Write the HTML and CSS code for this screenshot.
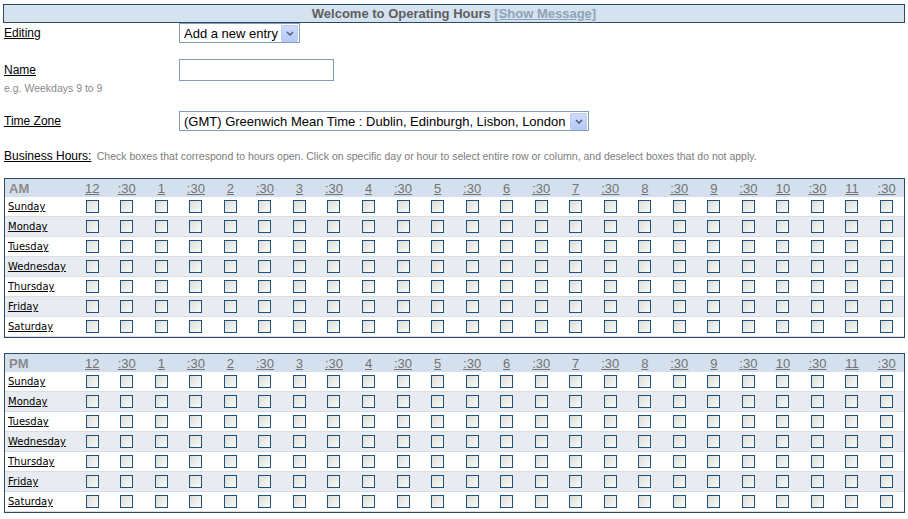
FILE: index.html
```html
<!DOCTYPE html>
<html lang="en">
<head>
    <meta charset="UTF-8">
    <meta name="viewport" content="width=device-width, initial-scale=1.0">
    <title>Operating Hours</title>
    <link rel="stylesheet" href="styles.css">
</head>
<body>
    <div class="titulo-bar">Welcome to Operating Hours <a href="#" class="show-msg">[Show Message]</a></div>

    <div class="form-row row-editing">
        <label class="campo">Editing</label>
        <div class="select-box select-editing">
            <select><option>Add a new entry</option></select>
            <span class="seta"><svg width="8" height="5" viewBox="0 0 8 5"><polyline points="1,1 4,4 7,1" fill="none" stroke="#4d6185" stroke-width="1.6"/></svg></span>
        </div>
    </div>

    <div class="form-row row-name">
        <label class="campo">Name</label>
        <input type="text" class="caixa-texto">
    </div>
    <div class="dica">e.g. Weekdays 9 to 9</div>

    <div class="form-row row-zone">
        <label class="campo">Time Zone</label>
        <div class="select-box select-zone">
            <select><option>(GMT) Greenwich Mean Time : Dublin, Edinburgh, Lisbon, London</option></select>
            <span class="seta"><svg width="8" height="5" viewBox="0 0 8 5"><polyline points="1,1 4,4 7,1" fill="none" stroke="#4d6185" stroke-width="1.6"/></svg></span>
        </div>
    </div>

    <div class="business">
        <span class="campo-inline">Business Hours:</span>
        <span class="descricao">Check boxes that correspond to hours open. Click on specific day or hour to select entire row or column, and deselect boxes that do not apply.</span>
    </div>

    <table class="grade" id="grade-am"></table>
    <table class="grade grade-pm" id="grade-pm"></table>

    <script>
        // monta as duas grades (AM / PM) com os checkboxes
        const horas = ['12', ':30', '1', ':30', '2', ':30', '3', ':30', '4', ':30', '5', ':30',
                       '6', ':30', '7', ':30', '8', ':30', '9', ':30', '10', ':30', '11', ':30'];
        const dias = ['Sunday', 'Monday', 'Tuesday', 'Wednesday', 'Thursday', 'Friday', 'Saturday'];

        function montarGrade(tabela, periodo) {
            let html = '<colgroup><col class="col-dia">';
            horas.forEach(() => html += '<col>');
            html += '</colgroup><thead><tr><th class="periodo">' + periodo + '</th>';
            horas.forEach(h => html += '<th><a href="#">' + h + '</a></th>');
            html += '</tr></thead><tbody>';

            dias.forEach(dia => {
                html += '<tr><td class="dia"><a href="#">' + dia + '</a></td>';
                horas.forEach(() => html += '<td><input type="checkbox"></td>');
                html += '</tr>';
            });

            tabela.innerHTML = html + '</tbody>';
        }

        montarGrade(document.getElementById('grade-am'), 'AM');
        montarGrade(document.getElementById('grade-pm'), 'PM');
    </script>
</body>
</html>
```

FILE: styles.css
```css
body {
    margin: 4px 3px;
    font-family: "Liberation Sans", Arial, sans-serif;
    font-size: 12px;
    color: #000;
    background-color: #fff;
}

/* barra do titulo */
.titulo-bar {
    background-color: #d5e2ef;
    border: 1px solid #2c4a62;
    height: 17px;
    line-height: 17px;
    text-align: center;
    font-size: 13px;
    font-weight: bold;
    color: #5e5e5e;
}

.show-msg { color: #8ea3b8; }

/* linhas do formulario */
.form-row {
    display: flex;
    align-items: center;
}

.campo {
    width: 175px;
    padding-left: 1px;
    text-decoration: underline;
}

.row-name { margin-top: 16px; }
.row-zone { margin-top: 17px; }

.select-box {
    display: flex;
    align-items: center;
    height: 18px;
    border: 1px solid #7f9db9;
    background-color: #fff;
}

.select-box select {
    appearance: none;
    -webkit-appearance: none;
    border: none;
    outline: none;
    background: transparent;
    flex: 1;
    padding: 0 0 0 4px;
    margin: 0;
    font-family: "Liberation Sans", Arial, sans-serif;
    font-size: 13px;
    color: #000;
    height: 18px;
}

.select-editing { width: 119px; }
.select-zone { width: 408px; }

.seta {
    display: flex;
    align-items: center;
    justify-content: center;
    width: 15px;
    height: 15px;
    margin-right: 1px;
    border: 1px solid #bccbf2;
    border-radius: 1px;
    background: linear-gradient(#cfdbfb, #b6c9f6);
}

.caixa-texto {
    margin: 0;
    padding: 0 3px;
    border: 1px solid #7f9db9;
    box-sizing: border-box;
    width: 155px;
    height: 22px;
    font-size: 13px;
}

.dica {
    margin-top: 1px;
    padding-left: 1px;
    font-size: 10.5px;
    line-height: 12px;
    color: #8a8a8a;
}

.business {
    margin-top: 18px;
    padding-left: 1px;
    line-height: 14px;
}

.campo-inline { text-decoration: underline; }

.descricao {
    font-size: 10.5px;
    color: #7c7c7c;
    margin-left: 2px;
}

/* grades de horario */
.grade {
    width: 901px;
    margin: 15px 0 0 1px;
    border: 1px solid #2b4a66;
    border-spacing: 0;
    table-layout: fixed;
}

.grade-pm { margin-top: 15px; }

.col-dia { width: 70px; }

.grade thead tr { background-color: #d4e0ed; }

.grade th {
    height: 18px;
    padding: 0;
    font-size: 13px;
    font-weight: normal;
    text-align: center;
}

.grade th a { color: #737373; }

.grade th.periodo {
    text-align: left;
    padding-left: 4px;
    font-size: 13px;
    font-weight: bold;
    color: #8a8a8a;
}

.grade td {
    height: 19px;
    padding: 0;
    border-bottom: 1px solid #d9dee4;
    text-align: center;
}

.grade tbody tr:nth-child(even) { background-color: #e8ecf1; }

.grade td.dia {
    text-align: left;
    padding-left: 3px;
    font-family: "DejaVu Sans", Verdana, sans-serif;
    font-size: 10px;
}

.grade td.dia a { color: #000; }

.grade input[type="checkbox"] {
    appearance: none;
    -webkit-appearance: none;
    display: block;
    width: 13px;
    height: 13px;
    margin: 0 auto;
    border: 1px solid #1c5180;
    background: linear-gradient(135deg, #dcdcd7, #fbfbf9);
}
```
